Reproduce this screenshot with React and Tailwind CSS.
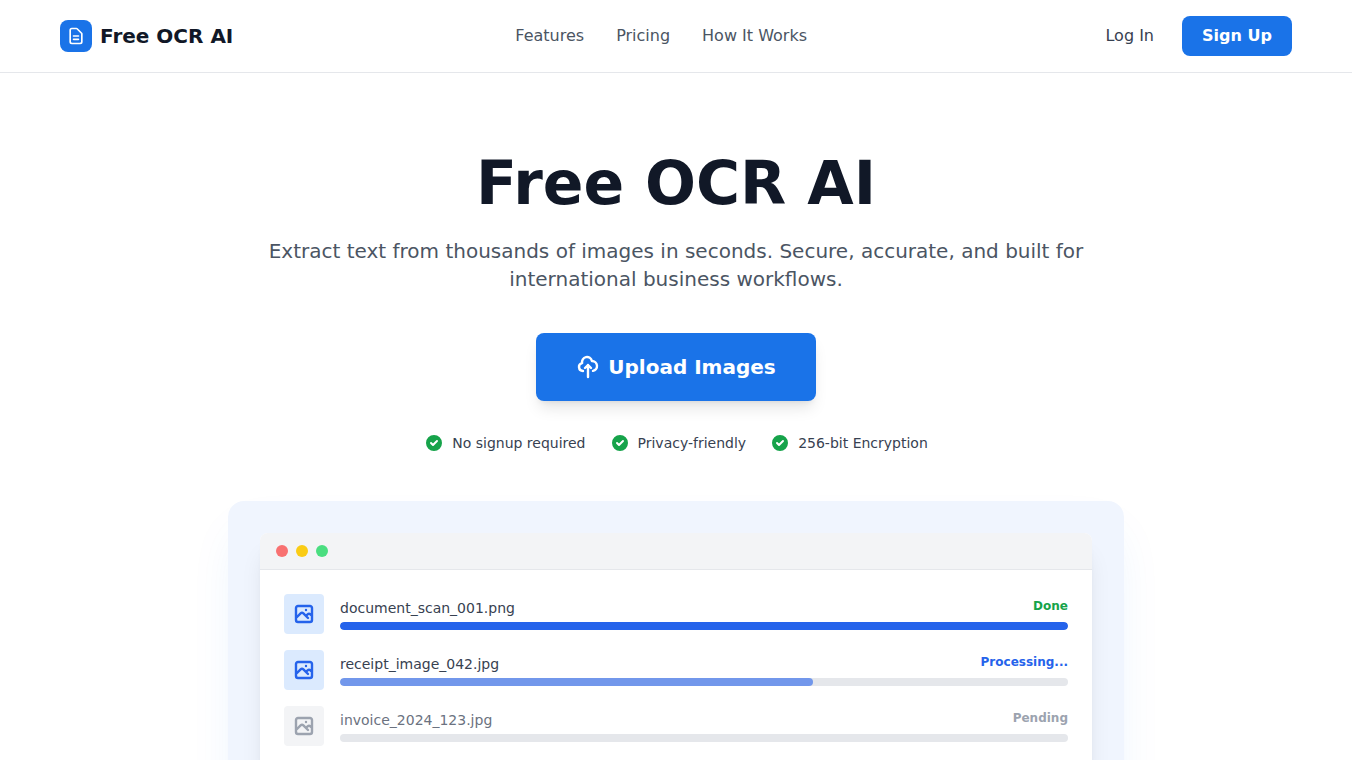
const FONT = "font-['DejaVu_Sans',sans-serif]";

function OutlineIcon({ size, className, d, strokeWidth = 2 }) {
  return (
    <svg width={size} height={size} viewBox="0 0 24 24" fill="none" stroke="currentColor" strokeWidth={strokeWidth} strokeLinecap="round" strokeLinejoin="round" className={className}>
      <path d={d} />
    </svg>
  );
}

const DOC_PATH = "M9 12h6m-6 4h6m2 5H7a2 2 0 01-2-2V5a2 2 0 012-2h5.586a1 1 0 01.707.293l5.414 5.414a1 1 0 01.293.707V19a2 2 0 01-2 2z";
const CLOUD_PATH = "M7 16a4 4 0 01-.88-7.903A5 5 0 1115.9 6L16 6a5 5 0 011 9.9M15 13l-3-3m0 0l-3 3m3-3v12";
const PHOTO_PATH = "M4 16l4.586-4.586a2 2 0 012.828 0L16 16m-2-2l1.586-1.586a2 2 0 012.828 0L20 14m-6-6h.01M6 20h12a2 2 0 002-2V6a2 2 0 00-2-2H6a2 2 0 00-2 2v12a2 2 0 002 2z";

function CheckBadge() {
  return (
    <svg width="20" height="20" viewBox="0 0 20 20" fill="#16a34a" className="shrink-0">
      <path fillRule="evenodd" clipRule="evenodd" d="M10 18a8 8 0 100-16 8 8 0 000 16zm3.707-9.293a1 1 0 00-1.414-1.414L9 10.586 7.707 9.293a1 1 0 00-1.414 1.414l2 2a1 1 0 001.414 0l4-4z" />
    </svg>
  );
}

function FileRow({ name, status, statusClass, tileClass, iconClass, nameClass, barClass, barWidth }) {
  return (
    <div className="flex items-center gap-4">
      <div className={`w-10 h-10 rounded flex items-center justify-center shrink-0 ${tileClass}`}>
        <OutlineIcon size={24} strokeWidth={2.4} d={PHOTO_PATH} className={iconClass} />
      </div>
      <div className="flex-1">
        <div className="flex justify-between items-center mb-1 h-[20px]">
          <span className={`text-sm leading-5 ${nameClass}`}>{name}</span>
          <span className={`text-xs leading-4 font-bold -mt-1 ${statusClass}`}>{status}</span>
        </div>
        <div className="h-2 rounded-full bg-[#e5e7eb] overflow-hidden">
          <div className={`h-full rounded-full ${barClass}`} style={{ width: barWidth }} />
        </div>
      </div>
    </div>
  );
}

export default function App() {
  return (
    <div className={`h-screen overflow-hidden bg-white antialiased ${FONT}`}>
      {/* Header */}
      <header className="h-[73px] border-b border-[#e5e7eb] px-[60px] flex items-center justify-between">
        <div className="flex items-center gap-2">
          <div className="w-8 h-8 rounded-lg bg-[#1a73e8] flex items-center justify-center">
            <OutlineIcon size={20} d={DOC_PATH} className="text-white" />
          </div>
          <span className="text-xl font-bold text-[#111827]">Free OCR AI</span>
        </div>
        <nav className="flex items-center gap-8 text-base text-[#4b5563]">
          <a>Features</a>
          <a>Pricing</a>
          <a>How It Works</a>
        </nav>
        <div className="flex items-center justify-end gap-7 w-[203px]">
          <a className="text-base text-[#374151]">Log In</a>
          <button className="h-10 w-[110px] rounded-lg bg-[#1a73e8] text-white text-base font-bold">Sign Up</button>
        </div>
      </header>

      {/* Hero */}
      <section className="flex flex-col items-center pt-[74px]">
        <h1 className="text-6xl leading-[72px] font-bold text-[#111827]">Free OCR AI</h1>
        <p className="mt-[18px] w-[896px] text-center text-xl leading-7 text-[#4b5563]">
          Extract text from thousands of images in seconds. Secure, accurate, and built for
          <br />
          international business workflows.
        </p>
        <button className="mt-10 w-[280px] h-[68px] rounded-lg bg-[#1a73e8] text-white text-xl font-bold flex items-center justify-center gap-2 shadow-lg">
          <OutlineIcon size={24} strokeWidth={2.4} d={CLOUD_PATH} />
          Upload Images
        </button>
        <div className="mt-[32px] flex items-center gap-6 text-sm text-[#374151]">
          <div className="flex items-center gap-2"><CheckBadge />No signup required</div>
          <div className="flex items-center gap-2"><CheckBadge />Privacy-friendly</div>
          <div className="flex items-center gap-2"><CheckBadge />256-bit Encryption</div>
        </div>

        {/* Preview */}
        <div className="mt-[48px] w-[896px] rounded-2xl bg-[#f0f5fe] p-8 shadow-[0_25px_50px_-12px_rgba(26,115,232,0.1)]">
          <div className="bg-white rounded-lg shadow-xl overflow-hidden">
            <div className="h-[37px] bg-[#f3f4f6] border-b border-[#e5e7eb] px-4 flex items-center gap-2">
              <span className="w-3 h-3 rounded-full bg-[#f87171]" />
              <span className="w-3 h-3 rounded-full bg-[#facc15]" />
              <span className="w-3 h-3 rounded-full bg-[#4ade80]" />
            </div>
            <div className="p-6 flex flex-col gap-4">
              <FileRow name="document_scan_001.png" status="Done" statusClass="text-[#16a34a]" tileClass="bg-[#dbeafe]" iconClass="text-[#2563eb]" nameClass="text-[#374151]" barClass="bg-[#2563eb]" barWidth="100%" />
              <FileRow name="receipt_image_042.jpg" status="Processing..." statusClass="text-[#2563eb]" tileClass="bg-[#dbeafe]" iconClass="text-[#2563eb]" nameClass="text-[#374151]" barClass="bg-[#2563eb]/60" barWidth="65%" />
              <FileRow name="invoice_2024_123.jpg" status="Pending" statusClass="text-[#9ca3af]" tileClass="bg-[#f3f4f6]" iconClass="text-[#9ca3af]" nameClass="text-[#6b7280]" barClass="bg-[#e5e7eb]" barWidth="0%" />
            </div>
          </div>
        </div>
      </section>
    </div>
  );
}
